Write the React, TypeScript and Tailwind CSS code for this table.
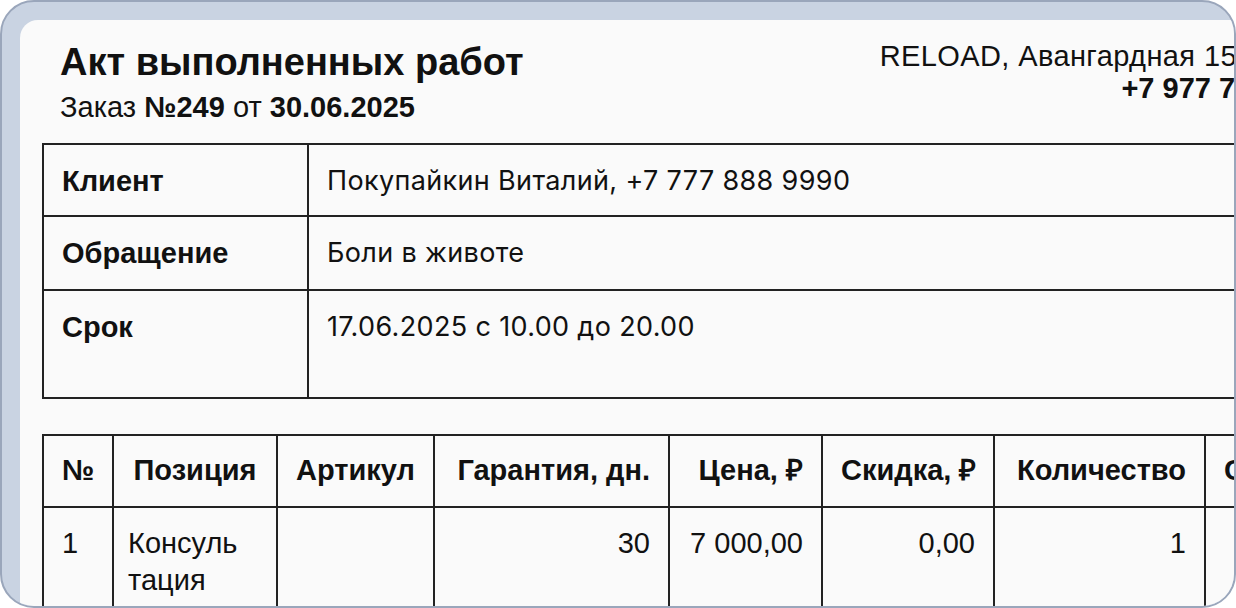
const info = [
  { label: 'Клиент', value: 'Покупайкин Виталий, +7 777 888 9990', h: 'h-[72px]' },
  { label: 'Обращение', value: 'Боли в животе', h: 'h-[74px]' },
  { label: 'Срок', value: '17.06.2025 с 10.00 до 20.00', h: 'h-[108px]' },
];

// column widths taken from the reference grid
const cols = [
  { title: '№', w: 'w-[70px]', align: 'text-left' },
  { title: 'Позиция', w: 'w-[164px]', align: 'text-center' },
  { title: 'Артикул', w: 'w-[157px]', align: 'text-center' },
  { title: 'Гарантия, дн.', w: 'w-[235px]', align: 'text-right' },
  { title: 'Цена, ₽', w: 'w-[153px]', align: 'text-right' },
  { title: 'Скидка, ₽', w: 'w-[172px]', align: 'text-right' },
  { title: 'Количество', w: 'w-[211px]', align: 'text-right' },
  { title: 'Сумма, ₽', w: 'w-[180px]', align: 'text-left' },
];

const row = ['1', 'Консуль тация', '', '30', '7 000,00', '0,00', '1', '7 000,00'];

export default function App() {
  return (
    <div className="w-[1236px] h-[608px] overflow-hidden rounded-[34px] border-2 border-[#9aa6bb] bg-[#c9d3e2] pl-[18px] pt-[18px]">
      <div className="w-[1480px] min-h-[700px] rounded-tl-[18px] bg-[#fafafa] pl-[22px] pt-[20px] text-[#111] font-['Liberation_Sans',Arial,sans-serif]">
        <div className="flex w-[1306px] justify-between pl-[18px]">
          <div>
            <h1 className="text-[38px] font-bold leading-[44px]">Акт выполненных работ</h1>
            <p className="mt-[3px] text-[29px] leading-[40px]">
              Заказ <b>№249</b> от <b>30.06.2025</b>
            </p>
          </div>
          <div className="text-right text-[29px] leading-[32px]">
            <p className="pr-[24px] tracking-[0.4px]">RELOAD, Авангардная 15 стр. 1</p>
            <p className="font-bold">+7 977 777 77 77</p>
          </div>
        </div>

        <table className="mt-[16px] w-[1300px] table-fixed border-collapse">
          <tbody>
            {info.map(r => (
              <tr key={r.label} className={r.h}>
                <td className="w-[265px] border-2 border-[#222] px-[18px] pt-[18px] align-top text-[29px] leading-[36px] font-bold">
                  {r.label}
                </td>
                <td className="border-2 border-[#222] px-[18px] pt-[18px] align-top text-[27px] leading-[36px] font-['Inter',sans-serif] tracking-[0.35px]">
                  {r.value}
                </td>
              </tr>
            ))}
          </tbody>
        </table>

        <table className="mt-[35px] w-[1342px] table-fixed border-collapse">
          <thead>
            <tr className="h-[72px]">
              {cols.map(c => (
                <th key={c.title} className={`${c.w} ${c.align} whitespace-nowrap border-2 border-[#222] px-[18px] text-[29px] font-bold`}>
                  {c.title}
                </th>
              ))}
            </tr>
          </thead>
          <tbody>
            <tr className="h-[110px]">
              {row.map((v, i) => (
                <td
                  key={i}
                  className={`${i < 2 ? 'text-left' : 'text-right'} ${i === 1 ? 'pl-[14px] pr-[18px]' : 'px-[18px]'} border-2 border-[#222] pt-[17px] align-top text-[29px] leading-[37px]`}
                >
                  {v}
                </td>
              ))}
            </tr>
          </tbody>
        </table>
      </div>
    </div>
  );
}
